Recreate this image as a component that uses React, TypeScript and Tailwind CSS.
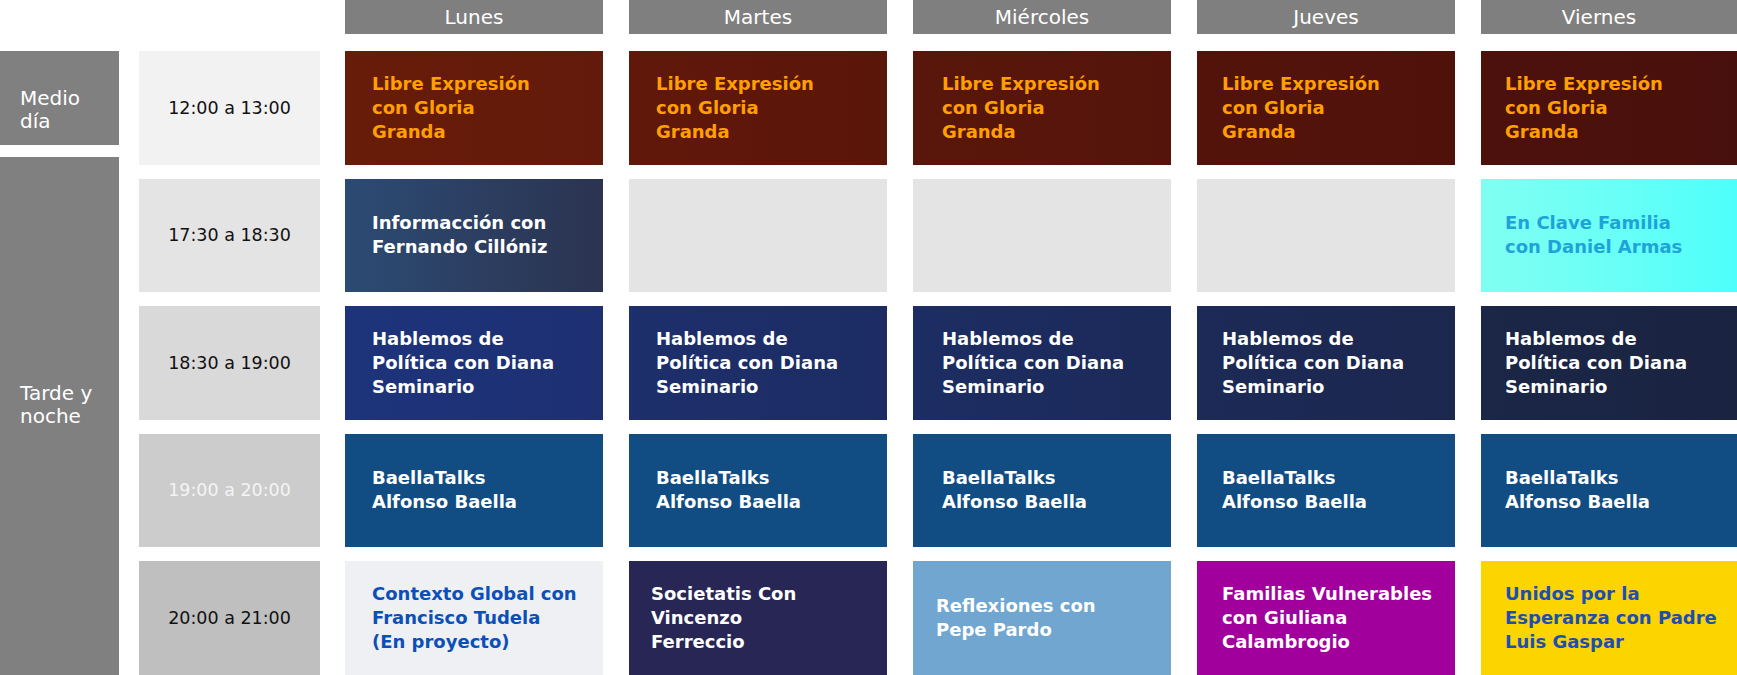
type Slot = {
  lines?: string[];
  bg: string;
  color?: string;
  pad?: string;
};

const days = ["Lunes", "Martes", "Miércoles", "Jueves", "Viernes"];

// sangría del texto por columna (lunes a viernes)
const colPad = ["pl-[27px]", "pl-[27px]", "pl-[29px]", "pl-[25px]", "pl-[24px]"];

const times = [
  { label: "12:00 a 13:00", bg: "bg-[#f2f2f2]", color: "text-[#111111]" },
  { label: "17:30 a 18:30", bg: "bg-[#e4e4e4]", color: "text-[#111111]" },
  { label: "18:30 a 19:00", bg: "bg-[#d9d9d9]", color: "text-[#111111]" },
  { label: "19:00 a 20:00", bg: "bg-[#cccccc]", color: "text-[#f4f4f4]" },
  { label: "20:00 a 21:00", bg: "bg-[#bfbfbf]", color: "text-[#111111]" },
];

const libre = ["Libre Expresión", "con Gloria", "Granda"];
const hablemos = ["Hablemos de", "Política con Diana", "Seminario"];
const baella = ["BaellaTalks", "Alfonso Baella"];

const grid: Slot[][] = [
  [
    { lines: libre, bg: "bg-linear-to-r from-[#681c09] to-[#621a0a]", color: "text-[#ffa000]" },
    { lines: libre, bg: "bg-linear-to-r from-[#60180a] to-[#5b160a]", color: "text-[#ffa000]" },
    { lines: libre, bg: "bg-linear-to-r from-[#59160b] to-[#55140b]", color: "text-[#ffa000]" },
    { lines: libre, bg: "bg-linear-to-r from-[#53130b] to-[#4f120b]", color: "text-[#ffa000]" },
    { lines: libre, bg: "bg-linear-to-r from-[#4d110c] to-[#48100c]", color: "text-[#ffa000]" },
  ],
  [
    {
      lines: ["Informacción con", "Fernando Cillóniz"],
      bg: "bg-linear-to-r from-[#2b4b74] to-[#2b3350]",
      color: "text-white",
    },
    { bg: "bg-[#e4e4e4]" },
    { bg: "bg-[#e4e4e4]" },
    { bg: "bg-[#e4e4e4]" },
    {
      lines: ["En Clave Familia", "con Daniel Armas"],
      bg: "bg-linear-to-r from-[#80fff1] to-[#4cfffb]",
      color: "text-[#1ea3d8]",
    },
  ],
  [
    { lines: hablemos, bg: "bg-linear-to-r from-[#1d337b] to-[#1e3072]", color: "text-white" },
    { lines: hablemos, bg: "bg-linear-to-r from-[#1d2f6c] to-[#1c2c63]", color: "text-white" },
    { lines: hablemos, bg: "bg-linear-to-r from-[#1c2d63] to-[#1c2a59]", color: "text-white" },
    { lines: hablemos, bg: "bg-linear-to-r from-[#1c2a57] to-[#1c274e]", color: "text-white" },
    { lines: hablemos, bg: "bg-linear-to-r from-[#1b2648] to-[#1a2340]", color: "text-white" },
  ],
  [
    { lines: baella, bg: "bg-[#114c82]", color: "text-white" },
    { lines: baella, bg: "bg-[#114c82]", color: "text-white" },
    { lines: baella, bg: "bg-[#114c82]", color: "text-white" },
    { lines: baella, bg: "bg-[#114c82]", color: "text-white" },
    { lines: baella, bg: "bg-[#114c82]", color: "text-white" },
  ],
  [
    {
      lines: ["Contexto Global con", "Francisco Tudela", "(En proyecto)"],
      bg: "bg-[#eef0f3]",
      color: "text-[#0b50b8]",
    },
    {
      lines: ["Societatis Con", "Vincenzo", "Ferreccio"],
      bg: "bg-[#272654]",
      color: "text-white",
      pad: "pl-[22px]",
    },
    {
      lines: ["Reflexiones con", "Pepe Pardo"],
      bg: "bg-[#70a6cf]",
      color: "text-white",
      pad: "pl-[23px]",
    },
    {
      lines: ["Familias Vulnerables", "con Giuliana", "Calambrogio"],
      bg: "bg-[#a1009c]",
      color: "text-white",
    },
    {
      lines: ["Unidos por la", "Esperanza con Padre", "Luis Gaspar"],
      bg: "bg-[#fcd400]",
      color: "text-[#1b4fb3]",
    },
  ],
];

export default function App() {
  return (
    <div className="w-[1737px] h-[675px] overflow-hidden bg-white font-['DejaVu_Sans',sans-serif]">
      <div className="flex h-[674.5px]">
        {/* franja horaria */}
        <div className="w-[119px] shrink-0 flex flex-col pt-[51px]">
          <div className="h-[94px] bg-[#808080] text-white text-[20px] leading-[23px] pl-[20px] pt-[24px] flex items-center">
            <span>
              Medio
              <br />
              día
            </span>
          </div>
          <div className="mt-[12px] flex-1 bg-[#808080] text-white text-[20px] leading-[23px] pl-[20px] pb-[22px] flex items-center">
            <span>
              Tarde y
              <br />
              noche
            </span>
          </div>
        </div>

        {/* horas */}
        <div className="ml-[20px] w-[181px] shrink-0 flex flex-col gap-[14px] pt-[51px]">
          {times.map((t) => (
            <div
              key={t.label}
              className={`h-[113.5px] flex items-center justify-center text-[17.5px] ${t.bg} ${t.color}`}
            >
              {t.label}
            </div>
          ))}
        </div>

        {/* programas */}
        <div className="ml-[25px] shrink-0 grid grid-cols-[repeat(5,258px)] grid-rows-[37px_repeat(5,113.5px)] gap-x-[26px] gap-y-[14px]">
          {days.map((d, i) => (
            <div
              key={d}
              className={`h-[34px] bg-[#7f7f7f] text-white text-[20px] flex items-center justify-center ${
                i === 4 ? "pr-[22px]" : ""
              }`}
            >
              {d}
            </div>
          ))}
          {grid.flatMap((row, r) =>
            row.map((cell, c) => (
              <div
                key={`${r}-${c}`}
                className={`flex items-center ${cell.pad ?? colPad[c]} ${cell.bg} ${cell.color ?? ""}`}
              >
                {cell.lines && (
                  <div className="text-[18px] leading-[24px] font-bold">
                    {cell.lines.map((l) => (
                      <div key={l} className="whitespace-nowrap">
                        {l}
                      </div>
                    ))}
                  </div>
                )}
              </div>
            ))
          )}
        </div>
      </div>
    </div>
  );
}
